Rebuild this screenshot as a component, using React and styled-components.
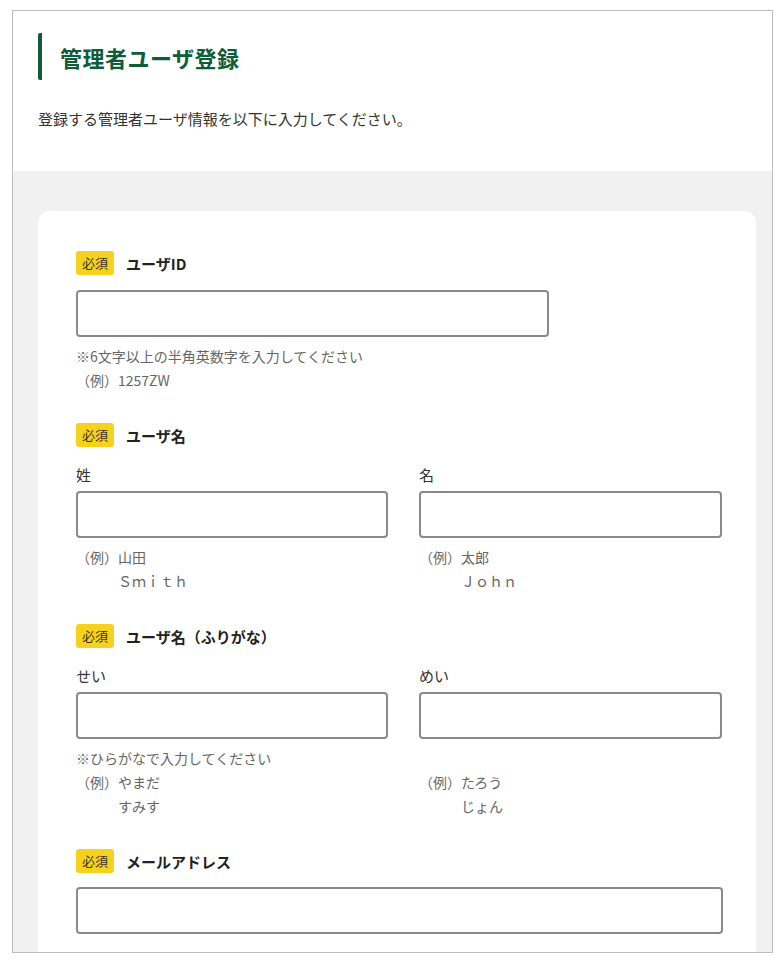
import React from "react";
import styled, { createGlobalStyle } from "styled-components";

// Global
const GlobalStyle = createGlobalStyle`
	body{
		margin: 0;
		background: #fff;
		font-family: "Noto Sans CJK JP", "Noto Sans", sans-serif;
		color: #333;
	}
`;

// Form fields
const HintLine = ({ note, example, example2 }) => (
	<Hints>
		{ note && <Note>{ note }</Note> }
		{ example && (
			<Example>
				<span>（例）</span>
				<ExampleValues>
					<span>{ example }</span>
					{ example2 && <span>{ example2 }</span> }
				</ExampleValues>
			</Example>
		) }
	</Hints>
);

const Heading = ({ children }) => (
	<LabelRow>
		<Badge>必須</Badge>
		<Label>{ children }</Label>
	</LabelRow>
);

// Component
const App = () => {
	return(
		<>
			<GlobalStyle/>
			<Frame>
				<Header>
					<Title>管理者ユーザ登録</Title>
					<Lead>登録する管理者ユーザ情報を以下に入力してください。</Lead>
				</Header>
				<Body>
					<Card>
						<Section>
							<Heading>ユーザID</Heading>
							<Input type="text" $width="473px" $gap="15px" />
							<HintLine note="※6文字以上の半角英数字を入力してください" example="1257ZW" />
						</Section>

						<Section>
							<Heading>ユーザ名</Heading>
							<Columns>
								<Column>
									<SubLabel>姓</SubLabel>
									<Input type="text" />
									<HintLine example="山田" example2="Ｓｍｉｔｈ" />
								</Column>
								<Column>
									<SubLabel>名</SubLabel>
									<Input type="text" />
									<HintLine example="太郎" example2="Ｊｏｈｎ" />
								</Column>
							</Columns>
						</Section>

						<Section>
							<Heading>ユーザ名（ふりがな）</Heading>
							<Columns>
								<Column>
									<SubLabel>せい</SubLabel>
									<Input type="text" />
									<HintLine note="※ひらがなで入力してください" example="やまだ" example2="すみす" />
								</Column>
								<Column>
									<SubLabel>めい</SubLabel>
									<Input type="text" />
									<HintLine note={ "\u00a0" } example="たろう" example2="じょん" />
								</Column>
							</Columns>
						</Section>

						<Section>
							<Heading>メールアドレス</Heading>
							<Input type="email" $gap="14px" />
						</Section>
					</Card>
				</Body>
			</Frame>
		</>
	);
};

// Styled
const Frame = styled.div`
	margin: 10px 0 0 12px;
	width: 759px;
	height: 941px;
	border: 1px solid #bdbdbd;
	overflow: hidden;
	display: flex;
	flex-direction: column;
`;

const Header = styled.header`
	background: #fff;
	padding: 22px 25px 40px;
`;

const Title = styled.h1`
	margin: 0;
	padding-left: 18px;
	border-left: 4px solid #0e5c38;
	border-radius: 2px;
	height: 47px;
	display: flex;
	align-items: center;
	font-size: 22px;
	font-weight: 700;
	color: #0e5c38;
	letter-spacing: 0.5px;
`;

const Lead = styled.p`
	margin: 27px 0 0;
	font-size: 15px;
	line-height: 24px;
	color: #333;
`;

const Body = styled.main`
	flex: 1;
	background: #f1f1f1;
	padding: 40px 16px 0 25px;
`;

const Card = styled.section`
	background: #fff;
	border-radius: 12px;
	padding: 40px 33px 40px 38px;
	display: flex;
	flex-direction: column;
	gap: 31px;
`;

const Section = styled.div`
	display: flex;
	flex-direction: column;
`;

const LabelRow = styled.div`
	display: flex;
	align-items: center;
	gap: 12px;
	height: 24px;
`;

const Badge = styled.span`
	background: #f7d21c;
	color: #333;
	font-size: 13px;
	line-height: 24px;
	padding: 0 6px;
	border-radius: 3px;
`;

const Label = styled.span`
	font-size: 15px;
	font-weight: 700;
	color: #222;
`;

const Columns = styled.div`
	display: grid;
	grid-template-columns: 312px 303px;
	column-gap: 31px;
	margin-top: 16px;
`;

const Column = styled.div`
	display: flex;
	flex-direction: column;
`;

const SubLabel = styled.div`
	font-size: 15px;
	line-height: 24px;
	color: #333;
	margin-bottom: 4px;
`;

const Input = styled.input`
	box-sizing: border-box;
	width: ${ props => props.$width || "100%" };
	height: 47px;
	margin: ${ props => props.$gap || "0" } 0 0;
	border: 2px solid #8a8a8a;
	border-radius: 4px;
	background: #fff;
	font: inherit;
	padding: 0 12px;
	&:focus{
		outline: none;
		border-color: #0e5c38;
	}
`;

const Hints = styled.div`
	margin-top: 7px;
	font-size: 14px;
	line-height: 24px;
	color: #666;
`;

const Note = styled.div``;

const Example = styled.div`
	display: flex;
`;

const ExampleValues = styled.div`
	display: flex;
	flex-direction: column;
`;

// Export
export default App;
